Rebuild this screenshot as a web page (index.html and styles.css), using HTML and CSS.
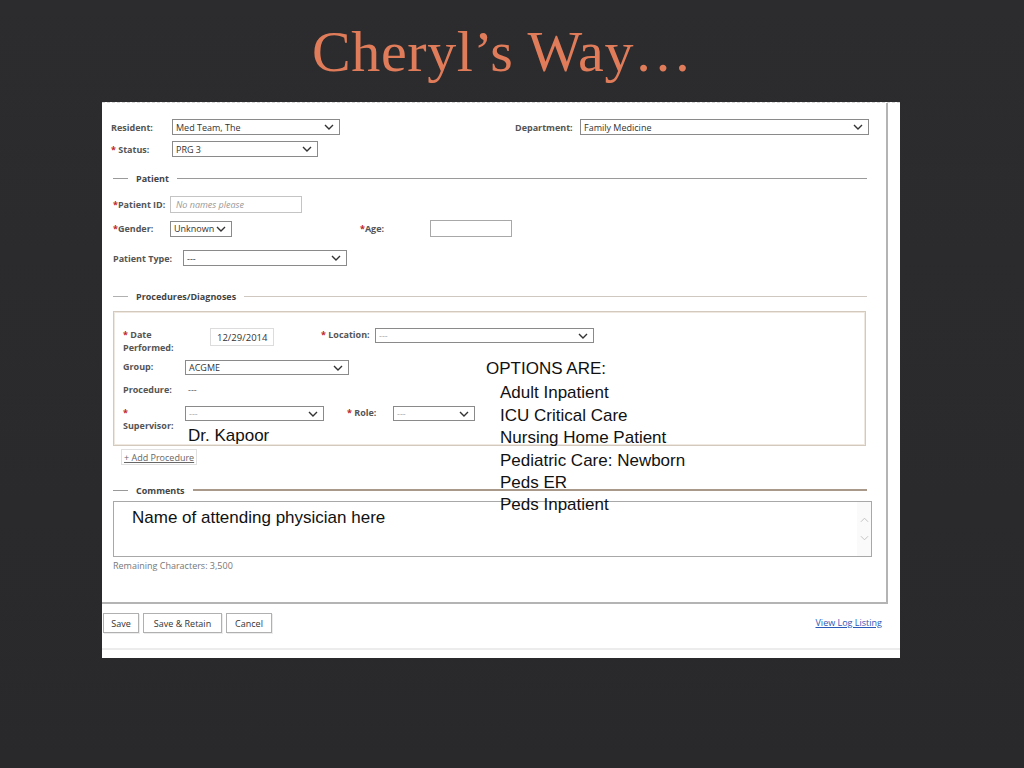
FILE: index.html
```html
<!DOCTYPE html>
<html>
<head>
<meta charset="utf-8">
<link rel="stylesheet" href="styles.css">
</head>
<body>
<div class="slide">
  <h1 class="title">Cheryl’s Way…</h1>
  <div class="panel">
    <div class="form">
      <div class="row r1">
        <span class="lbl w-top">Resident:</span>
        <div class="sel s-res"><span>Med Team, The</span><svg class="chev" viewBox="0 0 10 6"><polyline points="1,1 5,5 9,1"/></svg></div>
        <span class="lbl dept">Department:</span>
        <div class="sel s-dept"><span>Family Medicine</span><svg class="chev" viewBox="0 0 10 6"><polyline points="1,1 5,5 9,1"/></svg></div>
      </div>
      <div class="row r2">
        <span class="lbl w-top"><i class="req">*</i> Status:</span>
        <div class="sel s-status"><span>PRG 3</span><svg class="chev" viewBox="0 0 10 6"><polyline points="1,1 5,5 9,1"/></svg></div>
      </div>

      <div class="legend lg-patient"><span class="lg-line lg-lead"></span><span class="lg-text">Patient</span><span class="lg-line"></span></div>

      <div class="row r-pid">
        <span class="lbl w-pid"><i class="req">*</i>Patient ID:</span>
        <div class="inp pid">No names please</div>
      </div>
      <div class="row r-gender">
        <span class="lbl w-pid"><i class="req">*</i>Gender:</span>
        <div class="sel s-gender"><span>Unknown</span><svg class="chev" viewBox="0 0 10 6"><polyline points="1,1 5,5 9,1"/></svg></div>
        <span class="lbl age"><i class="req">*</i>Age:</span>
        <div class="inp age-in"></div>
      </div>
      <div class="row r-ptype">
        <span class="lbl w-ptype">Patient Type:</span>
        <div class="sel s-ptype"><span>---</span><svg class="chev" viewBox="0 0 10 6"><polyline points="1,1 5,5 9,1"/></svg></div>
      </div>

      <div class="legend lg-proc"><span class="lg-line lg-lead"></span><span class="lg-text">Procedures/Diagnoses</span><span class="lg-line"></span></div>

      <div class="fs">
        <div class="frow f-date">
          <span class="lbl f-lbl-date"><i class="req">*</i> Date<br>Performed:</span>
          <div class="inp date-in">12/29/2014</div>
          <span class="lbl loc"><i class="req">*</i> Location:</span>
          <div class="sel s-loc"><span class="dash">---</span><svg class="chev" viewBox="0 0 10 6"><polyline points="1,1 5,5 9,1"/></svg></div>
        </div>
        <div class="frow f-group">
          <span class="lbl f-lbl">Group:</span>
          <div class="sel s-group"><span>ACGME</span><svg class="chev" viewBox="0 0 10 6"><polyline points="1,1 5,5 9,1"/></svg></div>
        </div>
        <div class="frow f-proc">
          <span class="lbl f-lbl">Procedure:</span>
          <span class="proc-val">---</span>
        </div>
        <div class="frow f-sup">
          <span class="lbl f-lbl f-lbl-sup"><i class="req">*</i><br>Supervisor:</span>
          <div class="sel s-sup"><span class="dash">---</span><svg class="chev" viewBox="0 0 10 6"><polyline points="1,1 5,5 9,1"/></svg></div>
          <span class="lbl role"><i class="req">*</i> Role:</span>
          <div class="sel s-role"><span class="dash">---</span><svg class="chev" viewBox="0 0 10 6"><polyline points="1,1 5,5 9,1"/></svg></div>
        </div>
        <div class="note kapoor">Dr. Kapoor</div>
      </div>
      <a class="add-proc">+ Add Procedure</a>

      <div class="legend lg-comments"><span class="lg-line lg-lead"></span><span class="lg-text">Comments</span><span class="lg-line"></span></div>

      <div class="textarea">
        <div class="note ta-text">Name of attending physician here</div>
        <div class="scroll">
          <svg viewBox="0 0 10 6"><polyline points="1,5 5,1 9,5"/></svg>
          <svg viewBox="0 0 10 6"><polyline points="1,1 5,5 9,1"/></svg>
        </div>
      </div>
      <div class="remaining">Remaining Characters: 3,500</div>
    </div>

    <div class="footer">
      <div class="buttons">
        <span class="btn b-save">Save</span>
        <span class="btn b-retain">Save &amp; Retain</span>
        <span class="btn b-cancel">Cancel</span>
      </div>
      <a class="viewlog">View Log Listing</a>
    </div>

    <div class="note options">
      <div>OPTIONS ARE:</div>
      <ul class="opt-list">
        <li>Adult Inpatient</li>
        <li>ICU Critical Care</li>
        <li>Nursing Home Patient</li>
        <li>Pediatric Care: Newborn</li>
        <li>Peds ER</li>
        <li>Peds Inpatient</li>
      </ul>
    </div>
  </div>
</div>
</body>
</html>
```

FILE: styles.css
```css
* { box-sizing: border-box; }
html, body { margin: 0; padding: 0; }
body {
  width: 1024px;
  height: 768px;
  overflow: hidden;
  background: #2b2b2d;
}
.slide {
  height: 768px;
  background: linear-gradient(180deg, #2c2c2e 0%, #29292b 100%);
}
.title {
  margin: 0;
  height: 102px;
  padding: 23px 0 0 312px;
  font-family: "Liberation Serif", serif;
  font-weight: normal;
  font-size: 58px;
  line-height: 58px;
  color: #e07c59;
  letter-spacing: 0.6px;
}
.panel {
  position: relative;
  margin-left: 102px;
  width: 798px;
  height: 556px;
  background: #fff;
  border-top: 1px dashed #d8d8d8;
  font-family: "Open Sans", "DejaVu Sans", sans-serif;
  font-size: 9px;
  color: #333;
}
.form {
  width: 786px;
  height: 501px;
  border-right: 2px solid #b4b4b4;
  border-bottom: 2px solid #b4b4b4;
  padding-left: 11px;
  padding-top: 1px;
}
.row { display: flex; align-items: center; }
.lbl { font-weight: bold; color: #555; white-space: nowrap; }
.req { color: #c0262c; font-style: normal; }

.sel {
  display: flex;
  align-items: center;
  justify-content: space-between;
  border: 1px solid #8a8a8a;
  padding: 0 5px 0 3px;
  background: #fff;
  color: #333;
  white-space: nowrap;
}
.chev { width: 10px; height: 6px; flex: none; }
.chev polyline, .scroll polyline { fill: none; stroke: #333; stroke-width: 1.4; }
.dash { color: #aaa; }
.inp {
  border: 1px solid #a8a8a8;
  background: #fff;
}

/* top rows */
.r1 { margin-top: 15px; margin-left: -2px; height: 16px; }
.r2 { margin-top: 6px; margin-left: -2px; height: 16px; }
.w-top { width: 61px; }
.s-res { width: 168px; height: 16px; }
.dept { margin-left: 175px; width: 65px; }
.s-dept { width: 289px; height: 16px; }
.s-status { width: 146px; height: 16px; }

/* legends */
.legend {
  display: flex;
  align-items: center;
  height: 12px;
  margin-right: 19px;
}
.lg-line { flex: 1; height: 1px; background: #9a9a9a; }
.lg-line.lg-lead { flex: none; width: 15px; }
.lg-text { font-weight: bold; color: #444; padding: 0 8px; }
.lg-patient { margin-top: 15px; }
.lg-proc { margin-top: 24px; }
.lg-proc .lg-line { background: #cfc8c0; }
.lg-proc .lg-line.lg-lead { background: #b0b0b0; }
.lg-comments { margin-top: 19px; }
.lg-comments .lg-line { background: #a8998a; height: 2px; }
.lg-comments .lg-line.lg-lead { background: #999; height: 1px; }

/* patient */
.r-pid { margin-top: 12px; height: 17px; }
.w-pid { width: 57px; }
.pid {
  width: 132px;
  height: 17px;
  padding: 1px 5px;
  font-style: italic;
  color: #999;
  border-color: #c4c4c4;
}
.r-gender { margin-top: 7px; height: 17px; }
.s-gender { width: 62px; height: 16px; }
.age { margin-left: 128px; width: 70px; }
.age-in { width: 82px; height: 17px; }
.r-ptype { margin-top: 13px; height: 16px; }
.w-ptype { width: 70px; }
.s-ptype { width: 164px; height: 16px; }

/* procedures fieldset */
.fs {
  position: relative;
  margin-top: 9px;
  margin-right: 20px;
  height: 135px;
  border: 1px solid #d3c9bd;
  box-shadow: inset 0 0 0 1px #eee8e1;
  padding: 16px 0 0 9px;
}
.frow { display: flex; align-items: flex-start; }
.frow .lbl { line-height: 13px; }
.f-lbl-date { width: 87px; }
.date-in {
  width: 64px;
  height: 18px;
  padding: 2px 6px;
  border-color: #dcdcdc;
  color: #333;
  font-size: 9.5px;
}
.loc { margin-left: 47px; width: 54px; margin-top: 0; }
.s-loc { width: 219px; height: 15px; }
.f-group { margin-top: 6px; }
.f-lbl { width: 62px; }
.s-group { width: 164px; height: 15px; }
.f-proc { margin-top: 8px; }
.proc-val { padding-left: 3px; line-height: 13px; color: #555; }
.f-sup { margin-top: 10px; }
.s-sup { width: 139px; height: 15px; }
.role { margin-left: 23px; width: 46px; }
.s-role { width: 82px; height: 15px; }

.note {
  font-family: "Liberation Sans", Arial, sans-serif;
  font-size: 17px;
  color: #111;
  line-height: 19px;
}
.kapoor { position: absolute; left: 74px; top: 114px; }

.add-proc {
  display: inline-block;
  margin: 3px 0 0 8px;
  padding: 1px 2px;
  height: 16px;
  border: 1px solid #e0e0e0;
  color: #666;
  text-decoration: underline;
  line-height: 13px;
}

/* comments */
.textarea {
  position: relative;
  margin-top: 5px;
  width: 759px;
  height: 56px;
  border: 1px solid #a8a8a8;
  padding: 6px 0 0 18px;
}
.scroll {
  position: absolute;
  right: 0;
  top: 0;
  bottom: 0;
  width: 14px;
  background: #fafafa;
  display: flex;
  flex-direction: column;
  align-items: center;
  justify-content: center;
  gap: 12px;
}
.scroll svg { width: 9px; height: 6px; }
.scroll polyline { stroke: #bdbdbd; stroke-width: 1; }
.remaining { margin-top: 3px; color: #777; line-height: 12px; }

/* footer */
.footer {
  display: flex;
  justify-content: space-between;
  align-items: flex-start;
  height: 46px;
  padding: 9px 18px 0 1px;
  border-bottom: 2px solid #ececec;
}
.buttons { display: flex; gap: 4px; }
.btn {
  display: flex;
  align-items: center;
  justify-content: center;
  height: 20px;
  border: 1px solid #b0b0b0;
  color: #333;
  background: #fff;
  box-shadow: 1px 1px 0 #ececec;
}
.b-save { width: 36px; }
.b-retain { width: 79px; }
.b-cancel { width: 46px; }
.viewlog {
  margin-top: 3px;
  color: #2a59b8;
  text-decoration: underline;
}

.options {
  position: absolute;
  left: 384px;
  top: 255px;
  line-height: 22.4px;
}
.opt-list {
  list-style: none;
  margin: 2px 0 0 14px;
  padding: 0;
}
```
